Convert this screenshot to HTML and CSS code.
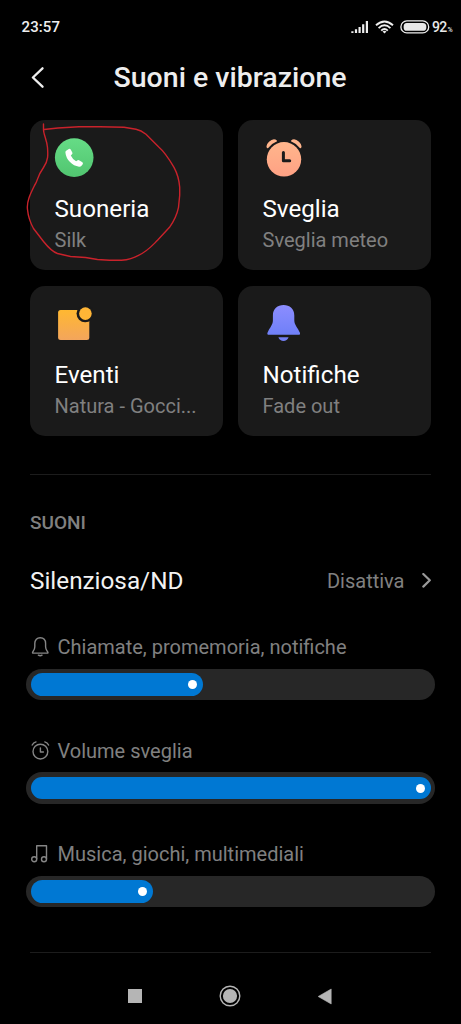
FILE: index.html
```html
<!DOCTYPE html>
<html lang="it">
<head>
<meta charset="utf-8">
<title>Suoni e vibrazione</title>
<link rel="stylesheet" href="styles.css">
</head>
<body>
<div class="screen">
  <header class="status">
    <span class="time">23:57</span>
    <div class="indicators">
      <svg class="signal" width="18" height="14" viewBox="0 0 18 14" fill="#eee"><path d="M.3 11.3h2.200V13H.3zM3.900 9.300h2.200V13H3.900zM7.500 6.900h2.200V13H7.500zM11.100 4.200h2.200V13h-2.200zM14.800 1.100H17V13h-2.200z"/></svg>
      <svg class="wifi" width="19" height="14" viewBox="0 0 19 14" fill="none" stroke="#eee" stroke-width="1.900"><path d="M1 5.300Q9.500-2.400 18 5.300M3.600 8.100Q9.500 2.600 15.400 8.100M6.200 10.600Q9.500 7.600 12.800 10.600"/><path d="M7.500 11.500Q9.500 10.100 11.500 11.500L9.500 13.600Z" fill="#eee" stroke="none"/></svg>
      <svg class="battery" width="30" height="14" viewBox="0 0 30 14"><rect x=".9" y=".9" width="27.800" height="12" rx="6" fill="none" stroke="#eee" stroke-width="1.300"/><path d="M6.800 3h16q3.600 0 3.600 3.900t-3.600 3.900h-16q-3.200 0-3.200-3.900T6.800 3Z" fill="#e8e8e8"/></svg>
      <span class="level">92<small>%</small></span>
    </div>
  </header>

  <div class="titlebar">
    <svg class="back" width="16" height="22" viewBox="0 0 16 22" fill="none" stroke="#eee" stroke-width="2.300" stroke-linecap="round" stroke-linejoin="round"><path d="M12.500 1.300 2.900 10.500l9.600 9.200"/></svg>
    <h1>Suoni e vibrazione</h1>
  </div>

  <section class="cards">
    <article class="card">
      <svg class="icon" width="40" height="40" viewBox="0 0 40 40">
        <defs><linearGradient id="green" x2="0" y2="1"><stop stop-color="#66dc86"/><stop offset="1" stop-color="#51c570"/></linearGradient></defs>
        <circle cx="20.200" cy="19.600" r="19.300" fill="url(#green)"/>
        <path d="M12.500 12.400 14.800 11q1.200-.5 1.900.600l1.600 2.900q.5 1-.300 1.800l-1.200 1.300q1.700 3.700 5.300 5.700l1.500-1q1-.6 1.900.1l2.900 1.900q1 .8.300 1.900l-1.400 1.900q-.8.900-2.300.700-5.200-.8-9-4.700-4.100-4.300-4.600-9.700-.1-1.300 1.100-2Z" fill="#fff"/>
      </svg>
      <h2>Suoneria</h2><p>Silk</p>
      <svg class="scribble" width="156" height="142" viewBox="26 122 156 142"><path d="M43.500 124v5.500c0 5 3.500 11 4 18s1 13-4 20c-7 10-5 12-9 18-4 8-8 16-7 24q1 10 6 19l10 13q8 10 14 12l13 3 15 1 12 2 12 .8h12q10-1 17-5c9-4 13-9 19-15l12-13q7-10 9-20l1.200-12v-8q-.8-11-5.700-20-9-15-15-20l-13-13q-5-4-10-5l-12-2-24-.5H79l-21 1.200-14 1.500" fill="none" stroke="#c9222b" stroke-width="1.400" stroke-linejoin="round" stroke-linecap="round"/></svg>
    </article>
    <article class="card">
      <svg class="icon" width="40" height="40" viewBox="0 0 40 40">
        <defs><linearGradient id="peach" x2="0" y2="1"><stop stop-color="#ffb68c"/><stop offset="1" stop-color="#ffa184"/></linearGradient></defs>
        <circle cx="22" cy="21.300" r="17.200" fill="url(#peach)"/>
        <path d="M4.800 9.800Q3.600 7 7 3.700 10.500.3 13.500 1.500q1.500.7 1.600 1.800Q9.500 5.500 6.200 10.100q-.9.500-1.400-.3ZM39.200 9.800q1.200-2.800-2.200-6.100Q33.500.3 30.500 1.500q-1.500.7-1.600 1.800 5.600 2.200 8.900 6.800.9.500 1.400-.3Z" fill="#ffb58c"/>
        <path d="M21.400 14.600v8.100h6.300" fill="none" stroke="#1b1b1b" stroke-width="3" stroke-linecap="round" stroke-linejoin="round"/>
      </svg>
      <h2>Sveglia</h2><p>Sveglia meteo</p>
    </article>
    <article class="card">
      <svg class="icon" width="40" height="40" viewBox="0 0 40 40">
        <defs><linearGradient id="amber" x2="0" y2="1"><stop stop-color="#ffb831"/><stop offset="1" stop-color="#f3a55c"/></linearGradient></defs>
        <rect x="4.100" y="6" width="31.200" height="30" rx="2.500" fill="url(#amber)"/>
        <circle cx="31.200" cy="9.600" r="8.700" fill="#1a1a1a"/><circle cx="31.400" cy="9.600" r="6.300" fill="#ffb536"/>
      </svg>
      <h2>Eventi</h2><p>Natura - Gocci...</p>
    </article>
    <article class="card">
      <svg class="icon" width="40" height="40" viewBox="0 0 40 40">
        <defs><linearGradient id="violet" x2="0" y2="1"><stop stop-color="#8c8dff"/><stop offset="1" stop-color="#6f80f8"/></linearGradient></defs>
        <path d="M10.900 11.500C10.900 4.800 15.500 1 21.600 1s10.700 3.800 10.700 10.500v4.800c0 4.700 3.300 7.200 5.500 12.200q.9 2.300-1.300 2.300H7q-2.400 0-1.400-2.300c2.200-5 5.300-7.500 5.300-12.200Z" fill="url(#violet)"/>
        <path d="M16.400 33.200h10.200q-1.500 3.800-5.100 3.800t-5.100-3.800Z" fill="#737ff2"/>
      </svg>
      <h2>Notifiche</h2><p>Fade out</p>
    </article>
  </section>

  <section class="sounds">
    <h3>SUONI</h3>
    <div class="setting"><span class="name">Silenziosa/ND</span><span class="value">Disattiva</span>
      <svg width="10" height="16" viewBox="0 0 10 16" fill="none" stroke="#999" stroke-width="2.200" stroke-linecap="round" stroke-linejoin="round"><path d="M2.300 1 8.800 7.300l-6.500 6.300"/></svg>
    </div>
    <div class="volume">
      <div class="label"><svg width="20" height="20" viewBox="0 0 20 20" fill="none" stroke="#858585" stroke-width="1.400" stroke-linejoin="round" stroke-linecap="round"><path d="M4.800 6.600C4.800 2.900 7.100.8 10.200.8s5.400 2.100 5.400 5.800v3.100c0 2.600 1.100 3.600 2.200 5.400q.5 1-.5 1H3.200q-1 0-.5-1C3.800 13.300 4.800 12.300 4.800 9.700Z"/><path d="M8.400 18.200q1.800 1.200 3.600 0"/></svg><span>Chiamate, promemoria, notifiche</span></div>
      <div class="track"><div class="fill" style="width:172px"><i></i></div></div>
    </div>
    <div class="volume">
      <div class="label"><svg width="20" height="20" viewBox="0 0 20 20" fill="none" stroke="#858585" stroke-width="1.400" stroke-linecap="round" stroke-linejoin="round"><circle cx="10.400" cy="10.600" r="7.400"/><path d="M2.200 4Q3.400 1.600 6 .9M18.600 4Q17.400 1.600 14.800.9M10.400 6.900V11h3"/></svg><span>Volume sveglia</span></div>
      <div class="track"><div class="fill" style="width:400px"><i></i></div></div>
    </div>
    <div class="volume">
      <div class="label"><svg width="20" height="20" viewBox="0 0 20 20" fill="none" stroke="#858585" stroke-width="1.400" stroke-linejoin="round"><circle cx="4.200" cy="15.300" r="2.500"/><circle cx="14" cy="15.300" r="2.500"/><path d="M6.700 15.300V1.700h9.800v13.600"/></svg><span>Musica, giochi, multimediali</span></div>
      <div class="track"><div class="fill" style="width:122px"><i></i></div></div>
    </div>
  </section>

  <nav class="navbar">
    <svg width="22" height="22" viewBox="0 0 22 22"><path d="M4 4h14v14H4z" fill="#b5b5b5"/></svg>
    <svg width="22" height="22" viewBox="0 0 22 22"><circle cx="11" cy="11" r="9.800" fill="none" stroke="#b5b5b5" stroke-width="1.400"/><circle cx="11" cy="11" r="7.100" fill="#b5b5b5"/></svg>
    <svg width="22" height="22" viewBox="0 0 22 22"><path d="M17.200 4v15L4.200 11.500Z" fill="#b5b5b5" stroke="#b5b5b5" stroke-width=".6" stroke-linejoin="round"/></svg>
  </nav>
</div>
</body>
</html>
```
FILE: styles.css
```css
* { box-sizing: border-box; }
body { margin: 0; background: #000; font-family: Roboto, "Liberation Sans", sans-serif; color: #f5f5f5; }
h1, h2, h3, p { margin: 0; }
svg { display: block; flex: none; }
.screen { width: 461px; height: 1024px; display: flex; flex-direction: column; overflow: hidden; background: #000; }

.status { height: 54px; display: flex; align-items: center; justify-content: space-between; padding: 0 8px 0 21.500px; }
.time { font-size: 15px; font-weight: 500; letter-spacing: .1px; color: #eee; }
.indicators { display: flex; align-items: center; }
.wifi { margin-left: 6px; }
.battery { margin-left: 6px; }
.level { width: 21px; margin-left: 2px; font-size: 14px; font-weight: 500; letter-spacing: -.7px; color: #e8e8e8; white-space: nowrap; }
.level small { margin-left: 1px; font-size: 7px; }

.titlebar { height: 48px; display: flex; align-items: center; padding-left: 30px; }
.titlebar h1 { margin-left: 67.500px; font-size: 28.500px; font-weight: 500; line-height: 48px; color: #eee; white-space: nowrap; }

.cards { display: grid; grid-template-columns: 193px 193px; grid-auto-rows: 150px; gap: 16px 15px; margin: 18px 30px 0; }
.card { position: relative; padding: 18px 20px 0 24px; border-radius: 15px; background: #1a1a1a; white-space: nowrap; }
.card h2 { margin-top: 16px; padding-left: .5px; font-size: 24.200px; font-weight: 400; line-height: 30px; color: #fff; }
.card p { margin-top: 1px; padding-left: .5px; font-size: 20px; line-height: 30px; color: #808080; }
.scribble { position: absolute; left: -4px; top: 2px; }

.sounds { height: 479px; margin: 38px 30px 0; padding-top: 33px; border-top: 1px solid #1c1c1c; border-bottom: 1px solid #1c1c1c; }
.sounds h3 { font-size: 19px; font-weight: 500; line-height: 30px; color: #808080; }
.setting { height: 46px; margin-top: 20px; display: flex; align-items: center; line-height: 46px; }
.name { flex: 1; font-size: 24.300px; color: #f2f2f2; }
.value { margin-right: 16.500px; font-size: 20px; color: #808080; }
.volume { height: 103.600px; padding-top: 28px; }
.label { height: 30px; display: flex; align-items: center; gap: 7.500px; font-size: 20px; line-height: 30px; color: #808080; }
.label span { white-space: nowrap; }
.track { height: 31.500px; margin: 6.700px -4px 0; padding: 4.500px 5px; border-radius: 16px; background: #272727; }
.fill { height: 22.500px; display: flex; align-items: center; justify-content: flex-end; padding-right: 6.500px; border-radius: 12px; background: #0078d3; }
.fill i { width: 9px; height: 9px; border-radius: 50%; background: #fff; }

.navbar { flex: 1; display: flex; align-items: center; justify-content: center; gap: 73px; padding: 15px 1px 0 0; }
```
